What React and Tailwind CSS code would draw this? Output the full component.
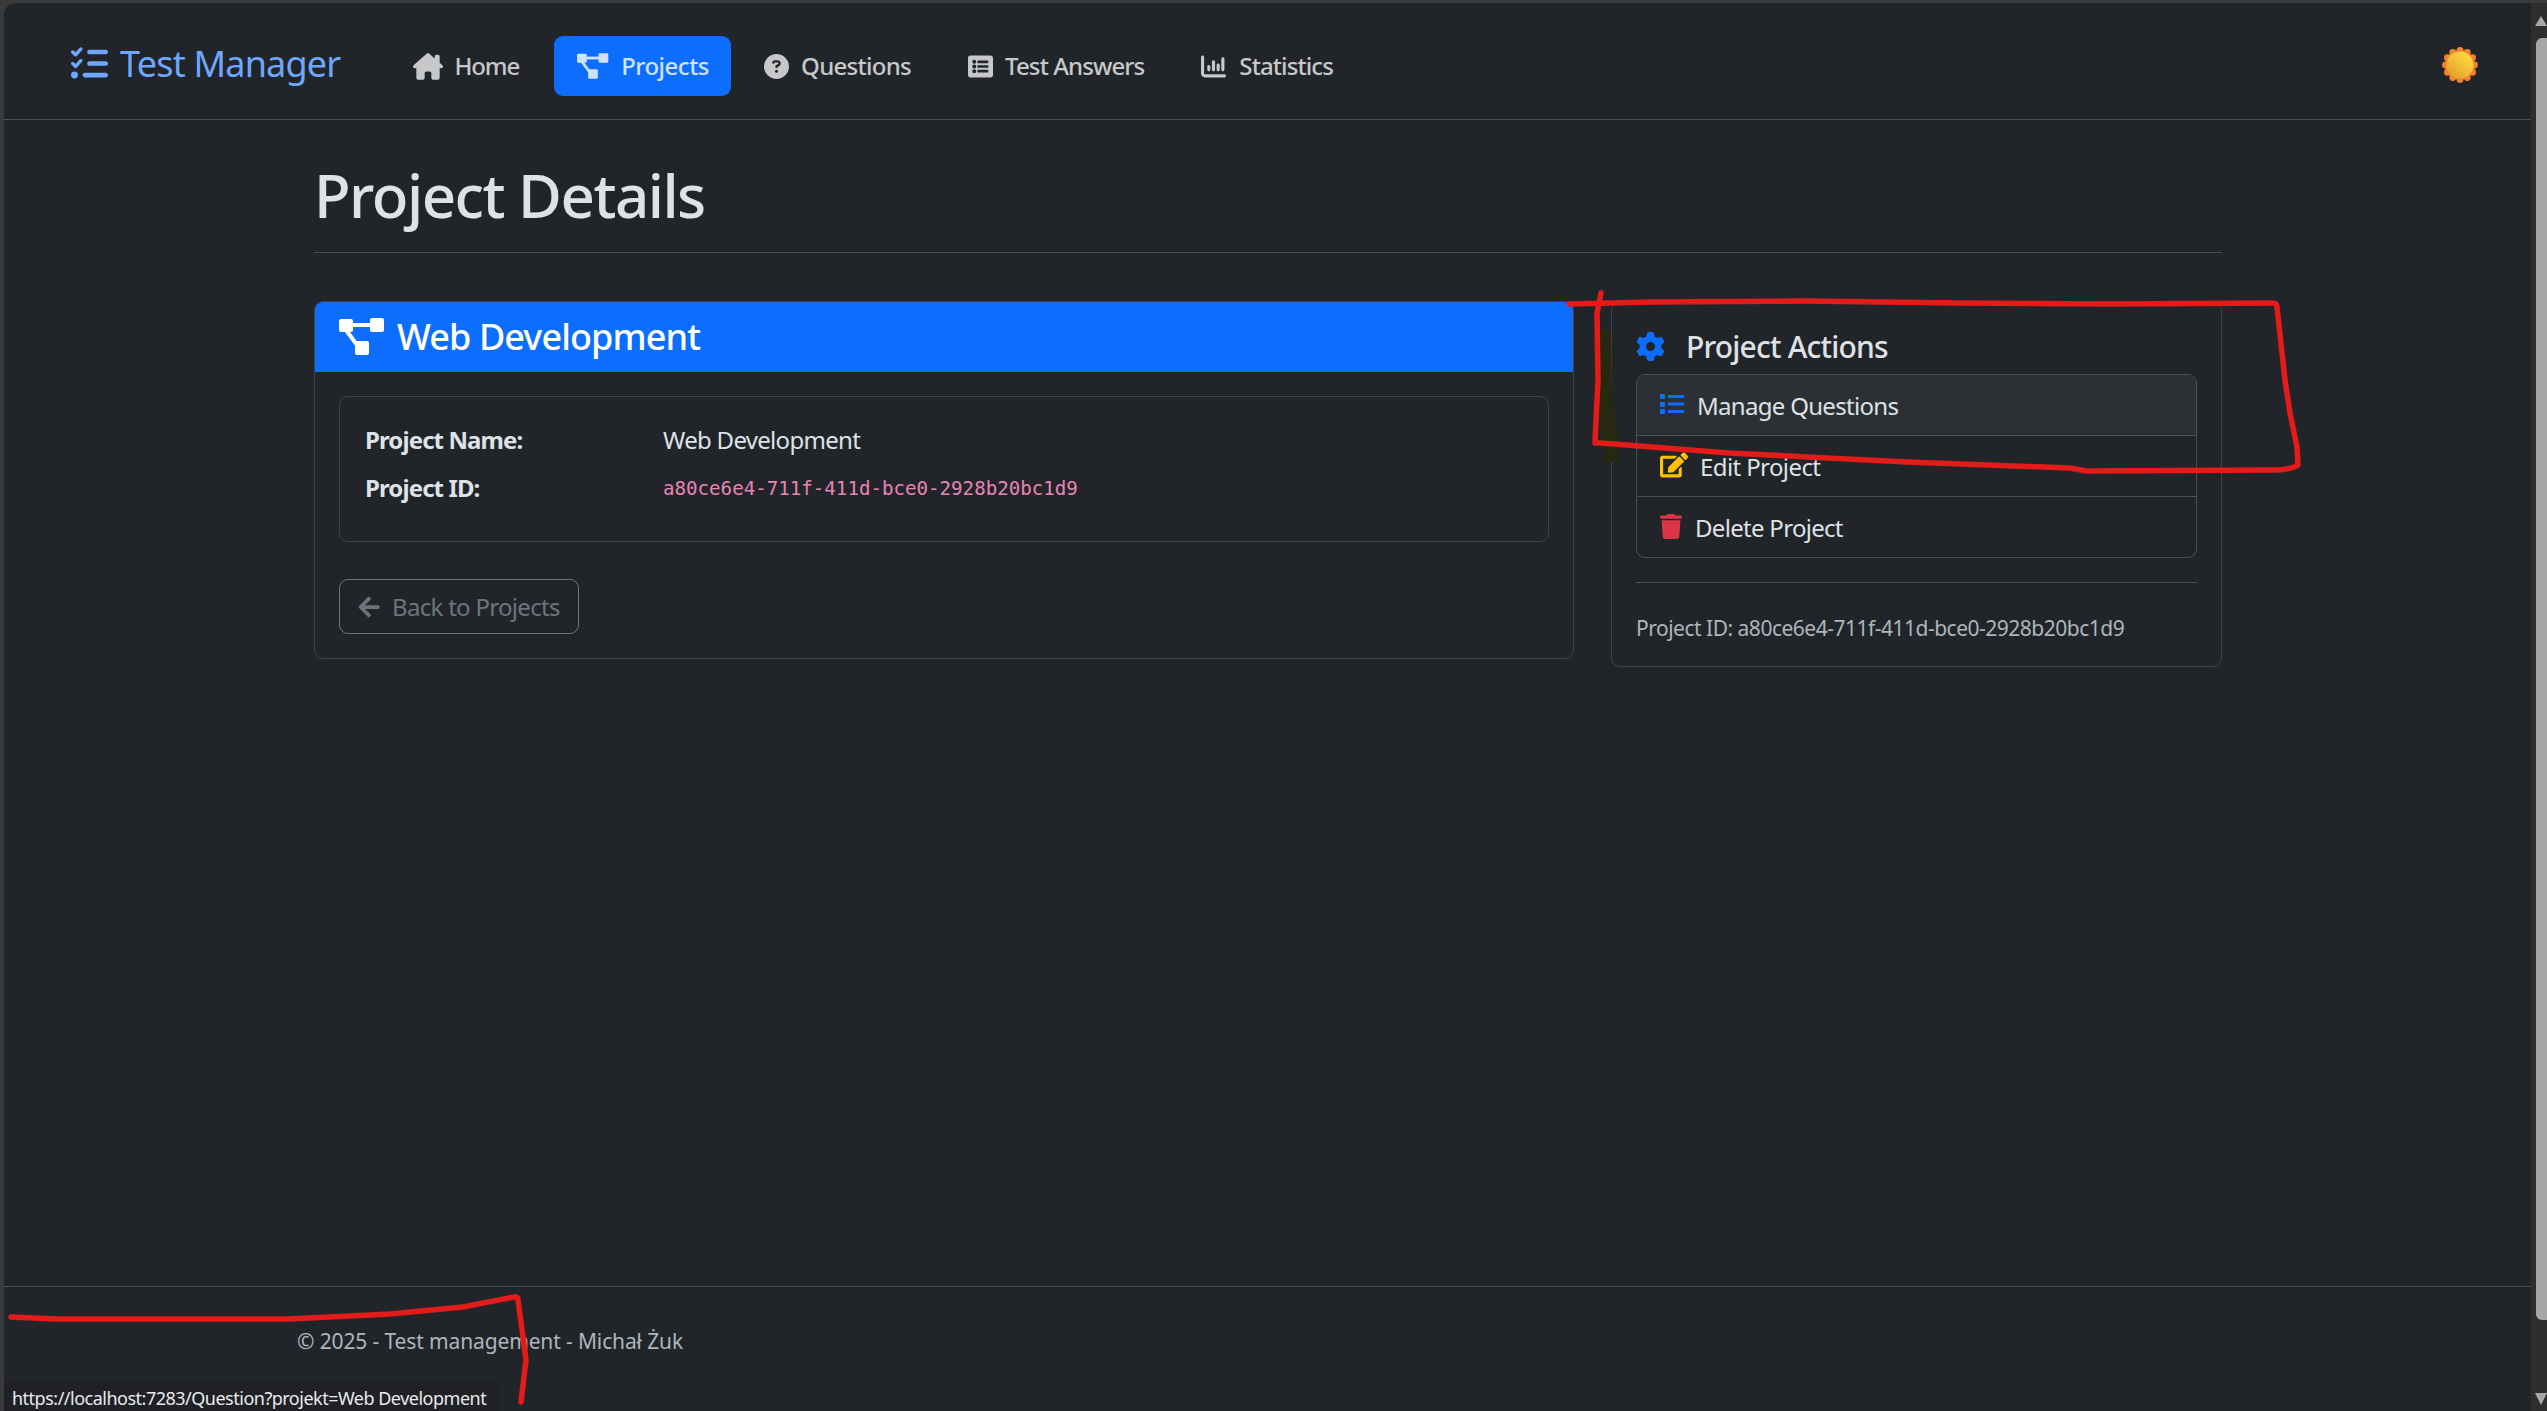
import React from "react";
import {
    FaListCheck,
    FaHouseChimney,
    FaCircleQuestion,
    FaChartColumn,
    FaGear,
    FaTrash,
} from "react-icons/fa6";
import { FaEdit, FaListAlt, FaArrowLeft } from "react-icons/fa";

const PROJECT_ID = "a80ce6e4-711f-411d-bce0-2928b20bc1d9";

const DiagramIcon = ({ className }) => (
    <svg viewBox="0 0 46 37" fill="currentColor" className={className}>
        <rect x="0" y="1" width="14" height="13" rx="2" />
        <rect x="31" y="0" width="14" height="14" rx="2" />
        <rect x="16" y="23" width="14" height="14" rx="2" />
        <rect x="12" y="5" width="20" height="4" />
        <path d="M7 12 L18 27" stroke="currentColor" strokeWidth="4" />
    </svg>
);

const ListIcon = ({ className }) => (
    <svg viewBox="0 0 24 20" fill="currentColor" className={className}>
        <rect x="0" y="0" width="5" height="5" />
        <rect x="0" y="8" width="5" height="5" />
        <rect x="0" y="15" width="5" height="5" />
        <rect x="8" y="1" width="16" height="3" />
        <rect x="8" y="8.5" width="16" height="3" />
        <rect x="8" y="16" width="16" height="3" />
    </svg>
);

const navItems = [
    { label: "Home", icon: FaHouseChimney, iconClass: "w-[30px] h-[27px]", gap: "gap-[11px]", pad: "pl-[23px] pr-[35px] tracking-[-1.1px]" },
    { label: "Projects", icon: DiagramIcon, iconClass: "w-[32px] h-[26px]", gap: "gap-[12px]", pad: "pl-[23px] pr-[22px] tracking-[-0.5px]", active: true },
    { label: "Questions", icon: FaCircleQuestion, iconClass: "w-[25px] h-[25px]", gap: "gap-[12px]", pad: "pl-[33px] pr-[23px] tracking-[-0.7px]" },
    { label: "Test Answers", icon: FaListAlt, iconClass: "w-[25px] h-[25px]", gap: "gap-[12px]", pad: "pl-[34px] pr-[23px] tracking-[-0.9px]" },
    { label: "Statistics", icon: FaChartColumn, iconClass: "w-[25px] h-[25px]", gap: "gap-[13px]", pad: "pl-[34px] pr-[23px] tracking-[-0.9px]" },
];

const Sun = () => {
    const bumps = Array.from({ length: 12 }, (_, i) => (i * Math.PI) / 6);
    return (
        <svg width="36" height="36" viewBox="0 0 36 36">
            <defs>
                <linearGradient id="sunFill" x1="0.8" y1="0.1" x2="0.2" y2="0.9">
                    <stop offset="0" stopColor="#ffd83f" />
                    <stop offset="1" stopColor="#e5a32b" />
                </linearGradient>
            </defs>
            <circle cx="18" cy="18" r="15" fill="#f6812f" />
            {bumps.map((a) => (
                <circle key={a} cx={18 + 14.5 * Math.sin(a)} cy={18 - 14.5 * Math.cos(a)} r="3.4" fill="#f6812f" />
            ))}
            <circle cx="18" cy="18" r="13.5" fill="url(#sunFill)" />
        </svg>
    );
};

const Scrollbar = () => (
    <div className="w-[16px] shrink-0 bg-[#2e2e2e] flex flex-col items-end relative">
        <svg width="12" height="10" viewBox="0 0 12 10" className="mt-[13px] fill-[#a8a8a8]">
            <path d="M6 0 L12 10 L0 10 Z" />
        </svg>
        <div className="mt-[12px] w-[11px] h-[1282px] bg-[#a6a6a6] rounded-l-[6px]" />
        <svg width="12" height="12" viewBox="0 0 12 12" className="mt-[73px] fill-[#a8a8a8]">
            <path d="M0 0 L12 0 L6 12 Z" />
        </svg>
    </div>
);

const Annotations = () => (
    <svg className="absolute inset-0 pointer-events-none" width="2547" height="1411" viewBox="0 0 2547 1411" fill="none">
        <path d="M1598 330 L1611 330 L1612 400 L1619 440 L1619 462 L1604 462 L1600 420 Z" fill="#26280f" />
        <path
            d="M1569 304 L1652 302 L1805 301 L1958 303 L2111 304 L2272 303 Q2277 303 2277 307 L2285 380 L2290 413 L2297 447 L2298 465 Q2290 470 2274 470 L2086 471 L2070 468 L1907 462 L1729 453 L1601 443 L1595 443 L1598 380 L1597 313 L1601 293"
            stroke="#e31b1b"
            strokeWidth="5.5"
            strokeLinecap="round"
            strokeLinejoin="round"
        />
        <path
            d="M11 1317 L55 1319 L289 1319 L390 1314 L463 1307 L514 1297 Q518 1296 518 1300 L523 1337 L526 1360 L521 1402"
            stroke="#e31b1b"
            strokeWidth="5.5"
            strokeLinecap="round"
            strokeLinejoin="round"
        />
    </svg>
);

const App = () => {
    return (
        <div className="relative h-[1411px] w-[2547px] overflow-hidden bg-[#3a3a3a] pt-[3px] pl-[4px] flex font-['Noto_Sans',sans-serif] text-[24px] text-[#dee2e6]">
            <div className="flex-1 min-w-0 bg-[#212529] rounded-tl-[12px] flex flex-col">
                <nav className="h-[117px] shrink-0 border-b border-[#495057] flex items-center pt-[10px] pl-[67px] pr-[53px]">
                    <a className="flex items-center gap-[12px] text-[36px] leading-none text-[#6ea8fe] -mt-[4px] tracking-[-0.8px]">
                        <FaListCheck className="text-[37px] -mt-[2px]" />
                        Test Manager
                    </a>
                    <div className="flex items-center ml-[50px] font-medium text-[#c7c8c9]">
                        {navItems.map(({ label, icon: Icon, iconClass, gap, pad, active }) => (
                            <a
                                key={label}
                                className={`h-[60px] flex items-center rounded-[9px] ${gap} ${pad} ${active ? "bg-[#0d6efd] text-[#cfe2ff]" : ""}`}
                            >
                                <Icon className={iconClass} />
                                {label}
                            </a>
                        ))}
                    </div>
                    <div className="ml-auto -mt-[2px]">
                        <Sun />
                    </div>
                </nav>

                <main className="flex-1 pl-[310px] pr-[309px]">
                    <h1 className="mt-[39px] pb-[21px] border-b border-[#495057] text-[60px] leading-[72px] font-medium tracking-[-1.5px]">
                        Project Details
                    </h1>
                    <div className="mt-[48px] flex items-start gap-[37px]">
                        <section className="w-[1260px] shrink-0 h-[358px] border border-[#3e4348] rounded-[9px] overflow-hidden">
                            <h2 className="h-[70px] bg-[#0d6efd] text-white text-[36px] font-medium flex items-center gap-[12px] pl-[24px] tracking-[-0.9px]">
                                <DiagramIcon className="w-[46px] h-[37px] -mt-[2px]" />
                                Web Development
                            </h2>
                            <div className="px-[24px] pt-[24px]">
                                <div className="h-[146px] border border-[#3e4348] rounded-[9px] pl-[25px] pt-[28px] flex flex-col gap-[18px]">
                                    <div className="flex items-center h-[30px]">
                                        <b className="w-[298px] font-bold tracking-[-0.9px]">Project Name:</b>
                                        <span className="tracking-[-0.7px]">Web Development</span>
                                    </div>
                                    <div className="flex items-center h-[30px]">
                                        <b className="w-[298px] font-bold tracking-[-0.9px]">Project ID:</b>
                                        <code className="pt-[2px] font-['DejaVu_Sans_Mono',monospace] text-[19.15px] text-[#e685b5]">{PROJECT_ID}</code>
                                    </div>
                                </div>
                                <a className="mt-[37px] w-[240px] h-[55px] border border-[#6c757d] rounded-[9px] text-[#6c757d] flex items-center gap-[11px] pl-[17px] tracking-[-0.7px]">
                                    <FaArrowLeft className="text-[24px]" />
                                    Back to Projects
                                </a>
                            </div>
                        </section>

                        <aside className="w-[611px] h-[366px] border border-[#3e4348] rounded-[9px] p-[24px]">
                            <h3 className="flex items-center gap-[21px] text-[30px] font-medium h-[48px] pb-[8px] tracking-[-0.8px]">
                                <FaGear className="text-[29px] text-[#0d6efd]" />
                                Project Actions
                            </h3>
                            <div className="border border-[#495057] rounded-[9px] overflow-hidden">
                                <a className="h-[61px] pt-[2px] bg-[#2b3035] flex items-center gap-[13px] pl-[23px] tracking-[-0.7px] border-b border-[#495057]">
                                    <ListIcon className="w-[24px] h-[20px] -mt-[4px] text-[#0d6efd]" />
                                    Manage Questions
                                </a>
                                <a className="h-[61px] pt-[2px] flex items-center gap-[12px] pl-[23px] tracking-[-0.6px] border-b border-[#495057]">
                                    <FaEdit className="text-[28px] -mt-[4px] text-[#ffc107]" />
                                    Edit Project
                                </a>
                                <a className="h-[60px] pt-[2px] flex items-center gap-[13px] pl-[23px] tracking-[-0.7px]">
                                    <FaTrash className="w-[22px] h-[25px] -mt-[4px] text-[#dc3545]" />
                                    Delete Project
                                </a>
                            </div>
                            <hr className="mt-[24px] border-[#495057]" />
                            <p className="mt-[33px] text-[21px] leading-[24px] text-[#adb5bd] tracking-[-0.5px]">
                                Project ID: {PROJECT_ID}
                            </p>
                        </aside>
                    </div>
                </main>

                <footer className="h-[125px] shrink-0 border-t border-[#495057] pl-[293px] pt-[40px] text-[21px] leading-[28px] text-[#adb5bd] tracking-[-0.13px]">
                    © 2025 - Test management - Michał Żuk
                </footer>
            </div>
            <Scrollbar />
            <Annotations />
            <div className="absolute left-[4px] bottom-0 w-[495px] h-[30px] bg-[#202124] rounded-tr-[6px] pl-[8px] text-[18px] leading-[34px] text-[#e8eaed] tracking-[-0.5px]">
                https://localhost:7283/Question?projekt=Web Development
            </div>
        </div>
    );
};

export default App;
